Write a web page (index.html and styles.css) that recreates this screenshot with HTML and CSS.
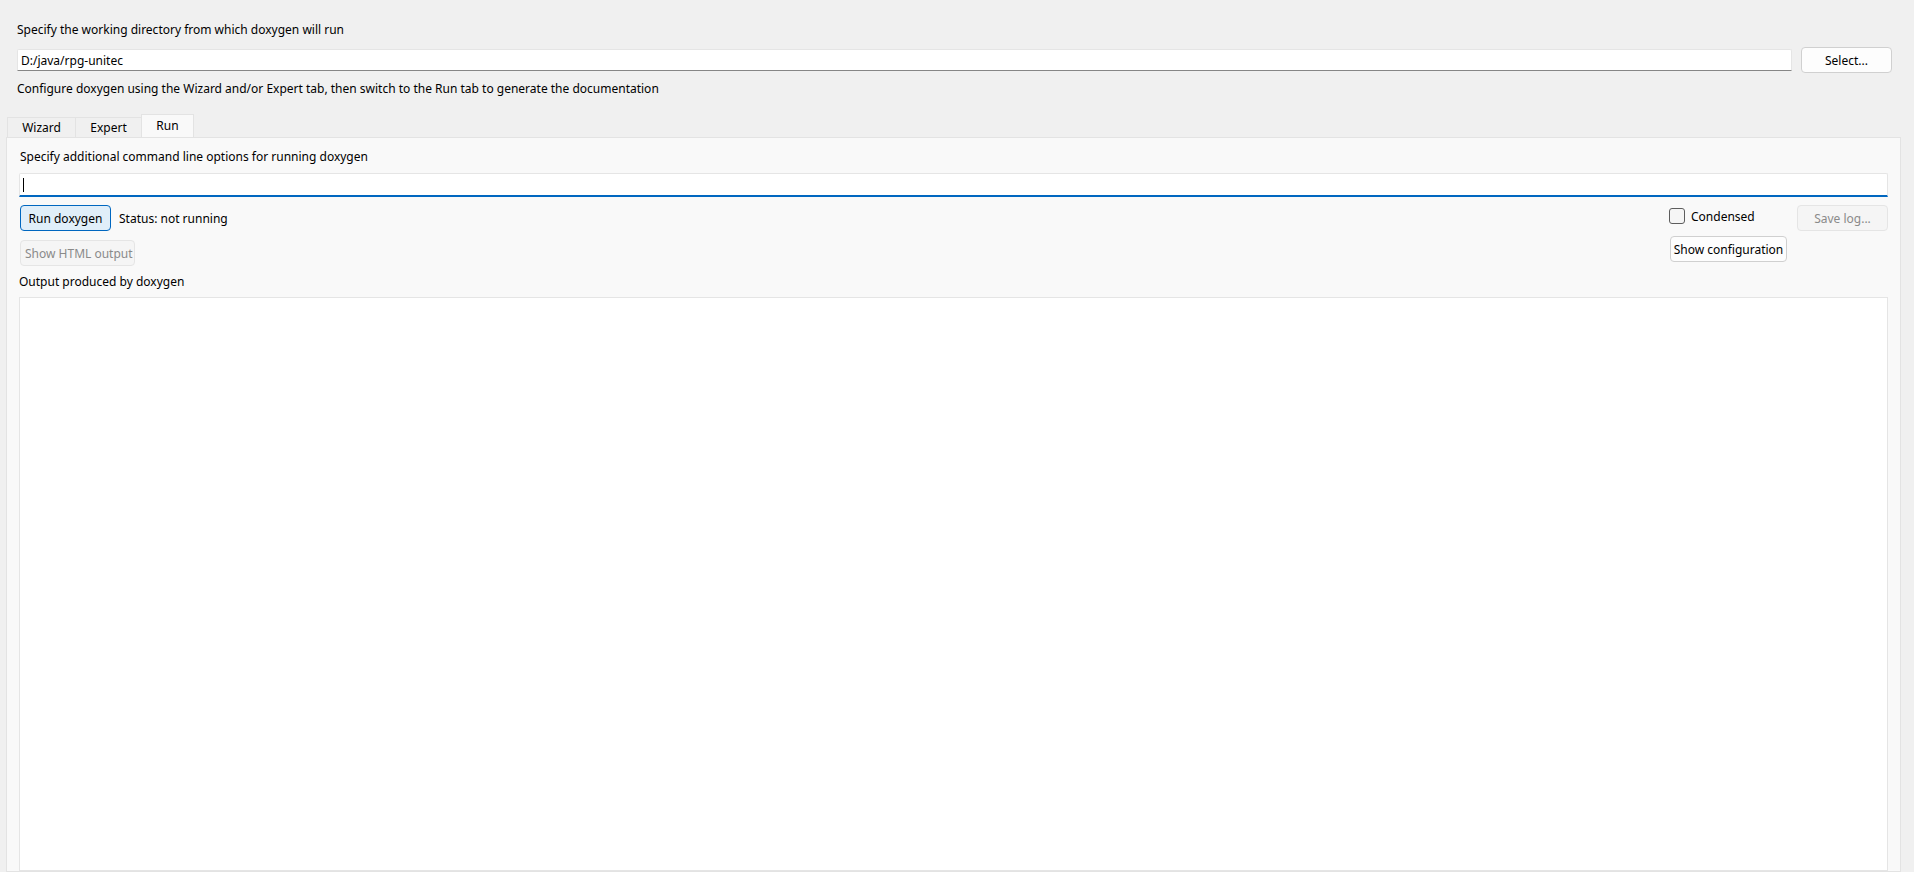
FILE: index.html
```html
<!DOCTYPE html>
<html>
<head>
    <meta charset="UTF-8">
    <title>Doxywizard</title>
    <link rel="stylesheet" href="styles.css">
</head>
<body>
<div class="top">
    <div class="label dir-label">Specify the working directory from which doxygen will run</div>
    <div class="dir-row">
        <div class="line-edit">D:/java/rpg-unitec</div>
        <button class="btn select-btn">Select...</button>
    </div>
    <div class="label hint">Configure doxygen using the Wizard and/or Expert tab, then switch to the Run tab to generate the documentation</div>
</div>
<div class="tabs">
    <span class="tab t-wizard">Wizard</span>
    <span class="tab t-expert">Expert</span>
    <span class="tab t-run active">Run</span>
</div>
<div class="panel">
    <div class="label opt-label">Specify additional command line options for running doxygen</div>
    <div class="opt-edit"><span class="caret"></span></div>
    <div class="controls">
        <div class="left-col">
            <div class="run-row">
                <button class="btn run-btn">Run doxygen</button>
                <span class="status">Status: not running</span>
            </div>
            <button class="btn disabled html-btn">Show HTML output</button>
        </div>
        <div class="right-col">
            <div class="right-a">
                <label class="check"><span class="box"></span>Condensed</label>
                <button class="btn config-btn">Show configuration</button>
            </div>
            <button class="btn disabled save-btn">Save log...</button>
        </div>
    </div>
    <div class="label out-label">Output produced by doxygen</div>
    <div class="output"></div>
</div>
</body>
</html>
```

FILE: styles.css
```css
*{ margin: 0; padding: 0; box-sizing: border-box;}
html, body{ height: 100%; }
body{
    background: #f0f0f0;
    font-family: "Noto Sans", "Open Sans", sans-serif;
    font-size: 12px;
    color: #000;
    overflow: hidden;
    display: flex;
    flex-direction: column;
}
.label{
    height: 16px;
    line-height: 16px;
    white-space: nowrap;
}
.top{
    padding: 22px 22px 0 17px;
}
.dir-row{
    display: flex;
    align-items: center;
    gap: 9px;
    margin-top: 9px;
}
.line-edit{
    flex: 1;
    height: 22px;
    line-height: 21px;
    background: #fff;
    border: 1px solid #e5e5e5;
    border-bottom-color: #868686;
    border-radius: 2px 2px 0 0;
    padding-left: 3px;
}
.btn{
    font: inherit;
    height: 26px;
    background: #fdfdfd;
    border: 1px solid #d0d0d0;
    border-radius: 4px;
    color: #000;
    padding: 0 4px;
    white-space: nowrap;
}
.select-btn{ width: 91px; }
.hint{ margin-top: 8px; }
.tabs{
    display: flex;
    align-items: flex-end;
    height: 24px;
    margin-top: 17px;
    padding-left: 7px;
}
.tab{
    height: 21px;
    line-height: 20px;
    text-align: center;
    border: 1px solid #e3e3e3;
    border-bottom: none;
    background: #f0f0f0;
    margin-right: -1px;
}
.t-wizard{ width: 69px; }
.t-expert{ width: 67px; }
.t-run{ width: 53px; }
.tab.active{
    height: 24px;
    line-height: 22px;
    background: #f9f9f9;
}
.panel{
    flex: 1;
    margin: -1px 13px 0 6px;
    background: #f9f9f9;
    border: 1px solid #e3e3e3;
    padding: 11px 12px 0 12px;
    display: flex;
    flex-direction: column;
}
.opt-label{ margin-left: 1px; }
.opt-edit{
    height: 24px;
    margin-top: 8px;
    background: #fff;
    border: 1px solid #e5e5e5;
    border-bottom: 2px solid #0067c0;
    border-radius: 2px 2px 0 0;
    position: relative;
}
.caret{
    position: absolute;
    left: 3px;
    top: 4px;
    width: 1px;
    height: 14px;
    background: #000;
}
.controls{
    display: flex;
    justify-content: space-between;
    margin-top: 8px;
}
.left-col{
    display: flex;
    flex-direction: column;
    align-items: flex-start;
    gap: 9px;
    padding-left: 1px;
}
.run-row{
    display: flex;
    align-items: center;
    gap: 8px;
}
.run-btn{
    width: 91px;
    background: #e0eef9;
    border-color: #0067c0;
}
.html-btn{ width: 115px; }
.btn.disabled{
    color: #8a8a8a;
    background: #f5f5f5;
    border-color: #e5e5e5;
}
.right-col{
    display: flex;
    gap: 10px;
}
.right-a{
    display: flex;
    flex-direction: column;
    gap: 12px;
    padding-top: 3px;
}
.check{
    display: flex;
    align-items: center;
    gap: 6px;
    height: 16px;
}
.box{
    width: 16px;
    height: 16px;
    border: 1px solid #5d5d5d;
    border-radius: 3px;
    background: #f5f5f5;
}
.config-btn{
    width: 117px;
    height: 26px;
    margin-left: 1px;
    padding: 0 2px;
}
.save-btn{ width: 91px; }
.out-label{ margin-top: 8px; }
.output{
    flex: 1;
    margin-top: 7px;
    background: #fff;
    border: 1px solid #e5e5e5;
}
```
